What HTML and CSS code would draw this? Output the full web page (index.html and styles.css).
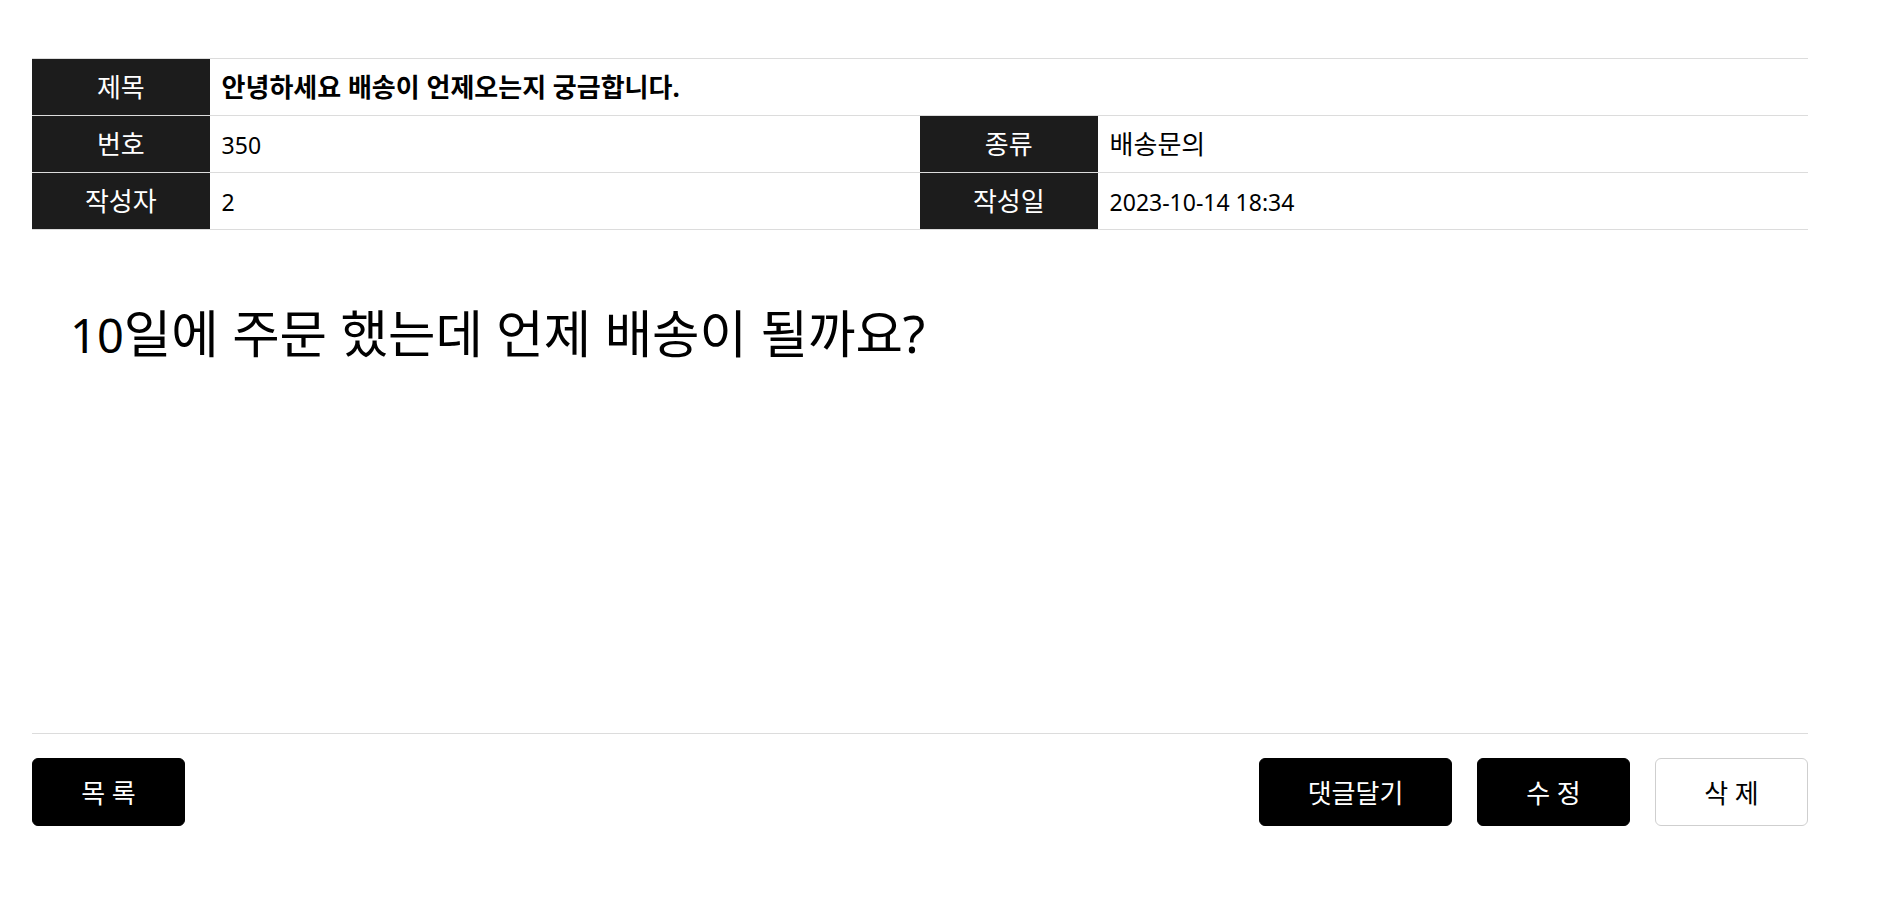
FILE: index.html
```html
<!DOCTYPE html>
<html lang="ko">
<head>
<meta charset="utf-8">
<title>문의 상세</title>
<link rel="stylesheet" href="styles.css">
</head>
<body>
<div class="page">
  <table class="info">
    <colgroup>
      <col class="c-head"><col class="c-val"><col class="c-head"><col class="c-val">
    </colgroup>
    <tr>
      <th>제목</th>
      <td colspan="3" class="title">안녕하세요 배송이 언제오는지 궁금합니다.</td>
    </tr>
    <tr>
      <th>번호</th>
      <td><span class="num">350</span></td>
      <th>종류</th>
      <td>배송문의</td>
    </tr>
    <tr>
      <th>작성자</th>
      <td><span class="num">2</span></td>
      <th>작성일</th>
      <td><span class="num">2023-10-14 18:34</span></td>
    </tr>
  </table>

  <div class="content"><span class="content-num">10</span>일에 주문 했는데 언제 배송이 될까요?</div>

  <div class="actions">
    <button class="btn btn-dark">목 록</button>
    <div class="right">
      <button class="btn btn-dark btn-wide">댓글달기</button>
      <button class="btn btn-dark">수 정</button>
      <button class="btn btn-light">삭 제</button>
    </div>
  </div>
</div>
</body>
</html>
```

FILE: styles.css
```css
* { box-sizing: border-box; }
html, body { margin: 0; padding: 0; background: #fff; }
body {
  font-family: "Noto Sans", "Noto Sans CJK KR", sans-serif;
  color: #000;
}
.page {
  width: 1776px;
  margin-left: 32px;
  padding-top: 58px;
}
.info {
  width: 100%;
  border-collapse: collapse;
  table-layout: fixed;
  border-top: 1px solid #dcdcdc;
  font-size: 26px;
}
.c-head { width: 10%; }
.c-val { width: 40%; }
.info th, .info td {
  height: 57px;
  border-bottom: 1px solid #dcdcdc;
  padding: 0 12px;
  vertical-align: middle;
  line-height: 30px;
}
.info th {
  background: #1c1c1c;
  color: #fff;
  font-weight: 400;
  text-align: center;
}
.info td { text-align: left; }
.info td.title { font-weight: 700; }
.num { font-size: 23px; }
.content {
  height: 504px;
  padding: 71px 0 0 38px;
  font-size: 51.6px;
  line-height: 64px;
  border-bottom: 1px solid #dcdcdc;
}
.content-num { font-size: 47px; }
.actions {
  display: flex;
  justify-content: space-between;
  padding-top: 24px;
}
.right { display: flex; gap: 25px; }
.btn {
  width: 153px;
  height: 68px;
  border-radius: 6px;
  font-family: "Noto Sans", "Noto Sans CJK KR", sans-serif;
  font-size: 26px;
  cursor: pointer;
}
.btn-wide { width: 193px; }
.btn-dark { background: #000; color: #fff; border: 1px solid #000; }
.btn-light { background: #fff; color: #000; border: 1px solid #cfcfcf; }
```
